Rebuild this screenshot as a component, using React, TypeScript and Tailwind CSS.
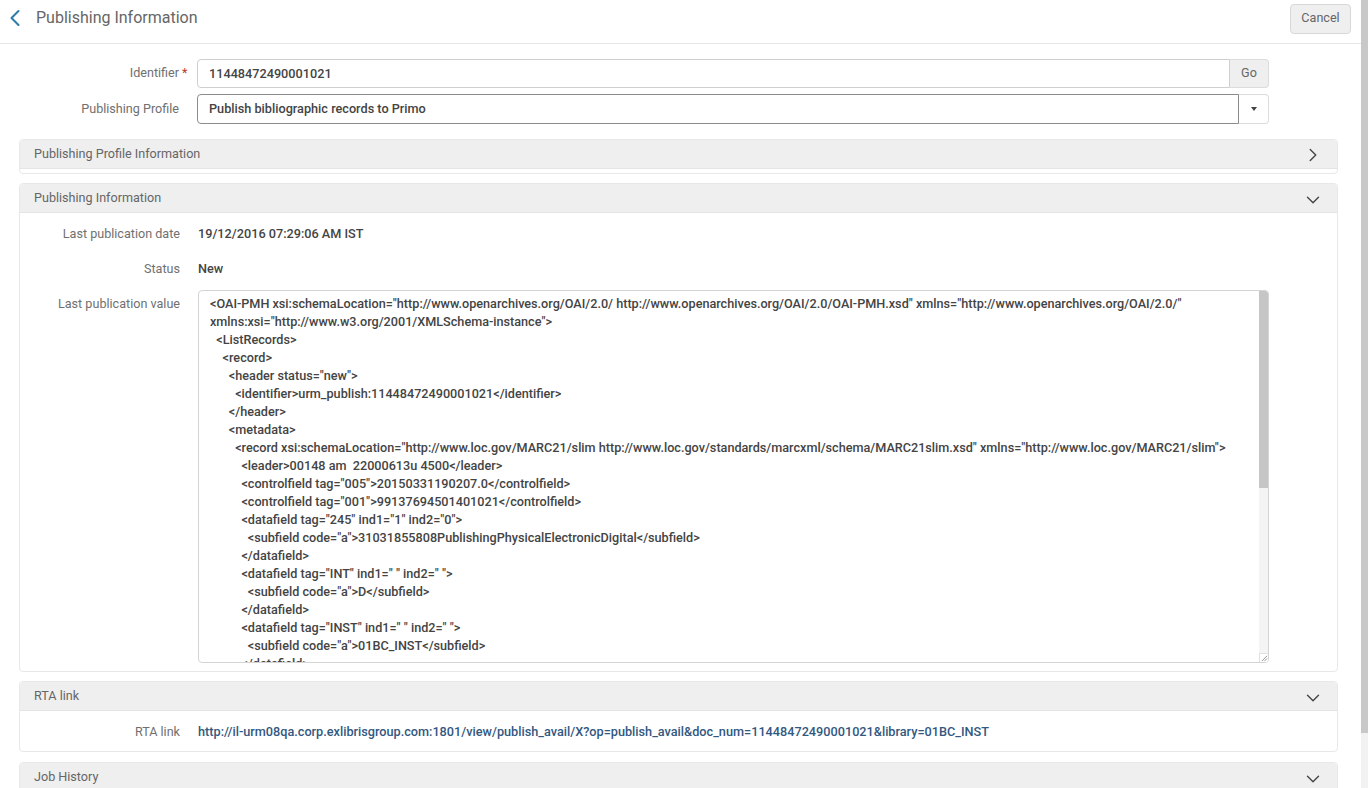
import React from 'react';
import { ChevronLeft, ChevronRight, ChevronDown } from 'lucide-react';

const XML_LINES = [
  '<OAI-PMH xsi:schemaLocation="http://www.openarchives.org/OAI/2.0/ http://www.openarchives.org/OAI/2.0/OAI-PMH.xsd" xmlns="http://www.openarchives.org/OAI/2.0/"',
  'xmlns:xsi="http://www.w3.org/2001/XMLSchema-instance">',
  '  <ListRecords>',
  '    <record>',
  '      <header status="new">',
  '        <identifier>urm_publish:11448472490001021</identifier>',
  '      </header>',
  '      <metadata>',
  '        <record xsi:schemaLocation="http://www.loc.gov/MARC21/slim http://www.loc.gov/standards/marcxml/schema/MARC21slim.xsd" xmlns="http://www.loc.gov/MARC21/slim">',
  '          <leader>00148 am  22000613u 4500</leader>',
  '          <controlfield tag="005">20150331190207.0</controlfield>',
  '          <controlfield tag="001">99137694501401021</controlfield>',
  '          <datafield tag="245" ind1="1" ind2="0">',
  '            <subfield code="a">31031855808PublishingPhysicalElectronicDigital</subfield>',
  '          </datafield>',
  '          <datafield tag="INT" ind1=" " ind2=" ">',
  '            <subfield code="a">D</subfield>',
  '          </datafield>',
  '          <datafield tag="INST" ind1=" " ind2=" ">',
  '            <subfield code="a">01BC_INST</subfield>',
  '          </datafield>',
];

const SectionHeader = ({ title, open = true }: { title: string; open?: boolean }) => (
  <div className="h-[29px] bg-[#efefef] border-b border-[#e4e4e4] rounded-t flex items-center justify-between pl-[14px] pr-[13px]">
    <span className="text-[12.6px] text-[#666]">{title}</span>
    {open ? (
      <ChevronDown className="w-[22px] h-[22px] text-[#444] mt-[3px]" strokeWidth={1.5} />
    ) : (
      <ChevronRight className="w-[22px] h-[22px] text-[#444] mt-[2px]" strokeWidth={1.5} />
    )}
  </div>
);

const Row = ({ label, children, className }: { label: string; children: React.ReactNode; className?: string }) => (
  <div className={'flex ' + (className || '')}>
    <div className="w-[160px] shrink-0 text-right text-[12.6px] leading-[18px] text-[#707070]">{label}</div>
    <div className="ml-[18px] min-w-0 flex-1 text-[12.7px] leading-[18px] font-medium text-[#444]">{children}</div>
  </div>
);

export default function App() {
  return (
    <div className="h-[788px] overflow-hidden flex bg-white" style={{ fontFamily: 'Roboto, sans-serif' }}>
      <div className="flex-1 min-w-0">
        <div className="h-[44px] border-b border-[#e8e8e8] flex items-center pl-[1px] pr-[10px]">
          <ChevronLeft className="w-7 h-7 text-[#2e7da6] mb-[8px]" strokeWidth={1.8} />
          <h1 className="ml-[7px] mb-[7px] text-base text-[#666]">Publishing Information</h1>
          <button className="ml-auto mb-[6px] w-[61px] h-[30px] bg-[#efefef] border border-[#d8d8d8] rounded text-[12.6px] text-[#666]">
            Cancel
          </button>
        </div>

        <div className="pt-[15px] pl-[19px] pr-[23px]">
          <div className="flex items-center h-[29px]">
            <div className="relative w-[160px] shrink-0 text-right text-[12.6px] text-[#707070] whitespace-nowrap">
              Identifier
              <span className="absolute left-full ml-[3px] text-[#c0392b]">*</span>
            </div>
            <div className="ml-[18px] w-[1072px] h-[29px] flex">
              <div className="flex-1 border border-[#cfcfcf] rounded-l flex items-center pl-[11px] text-[12.7px] font-medium text-[#444]">
                11448472490001021
              </div>
              <button className="w-[39px] bg-[#efefef] border border-l-0 border-[#dcdcdc] rounded-r text-[12.6px] text-[#666]">Go</button>
            </div>
          </div>
          <div className="flex items-center h-[30px] mt-[6px]">
            <div className="w-[160px] shrink-0 text-right text-[12.6px] text-[#707070]">Publishing Profile</div>
            <div className="ml-[18px] w-[1072px] h-[30px] flex">
              <div className="flex-1 border border-[#8c8c8c] rounded-l flex items-center pl-[11px] text-[12.7px] font-medium text-[#444]">
                Publish bibliographic records to Primo
              </div>
              <div className="w-[30px] border border-l-0 border-[#dcdcdc] rounded-r flex items-center justify-center">
                <div className="w-0 h-0 border-l-[3.5px] border-r-[3.5px] border-t-[4px] border-l-transparent border-r-transparent border-t-[#444]" />
              </div>
            </div>
          </div>

          <section className="mt-[15px] border border-[#e8e8e8] rounded h-[35px]">
            <SectionHeader title="Publishing Profile Information" open={false} />
          </section>

          <section className="mt-[9px] border border-[#e8e8e8] rounded h-[489px]">
            <SectionHeader title="Publishing Information" />
            <Row label="Last publication date" className="mt-[12px]">19/12/2016 07:29:06 AM IST</Row>
            <Row label="Status" className="mt-[17px]">New</Row>
            <Row label="Last publication value" className="mt-[17px]">
              <div className="-mt-[5px] relative w-[1071px] h-[373px] border border-[#d4d4d4] rounded-sm overflow-hidden pl-[11px] pr-[20px] pt-[4px] whitespace-pre-wrap text-[12.65px] text-[#444]">
                {XML_LINES.join('\n')}
                <div className="absolute top-0 right-0 bottom-0 w-[9px] bg-[#f4f4f4]">
                  <div className="h-[197px] bg-[#c6c6c6]" />
                </div>
                <div className="absolute right-0 bottom-0 w-[9px] h-[9px] bg-white border-l border-t border-[#e0e0e0]">
                  <svg viewBox="0 0 9 9" className="w-full h-full">
                    <path d="M2 8 L8 2 M5 8 L8 5" stroke="#888" strokeWidth="1" fill="none" />
                  </svg>
                </div>
              </div>
            </Row>
          </section>

          <section className="mt-[9px] border border-[#e8e8e8] rounded h-[71px]">
            <SectionHeader title="RTA link" />
            <Row label="RTA link" className="mt-[12px]">
              <a className="text-[#33587f]">
                http://il-urm08qa.corp.exlibrisgroup.com:1801/view/publish_avail/X?op=publish_avail&doc_num=11448472490001021&library=01BC_INST
              </a>
            </Row>
          </section>

          <section className="mt-[10px] border border-[#e8e8e8] rounded">
            <SectionHeader title="Job History" />
          </section>
        </div>
      </div>

      <div className="w-[7px] shrink-0 bg-[#f2f2f2]">
        <div className="h-[733px] bg-[#c8c8c8]" />
      </div>
    </div>
  );
}
